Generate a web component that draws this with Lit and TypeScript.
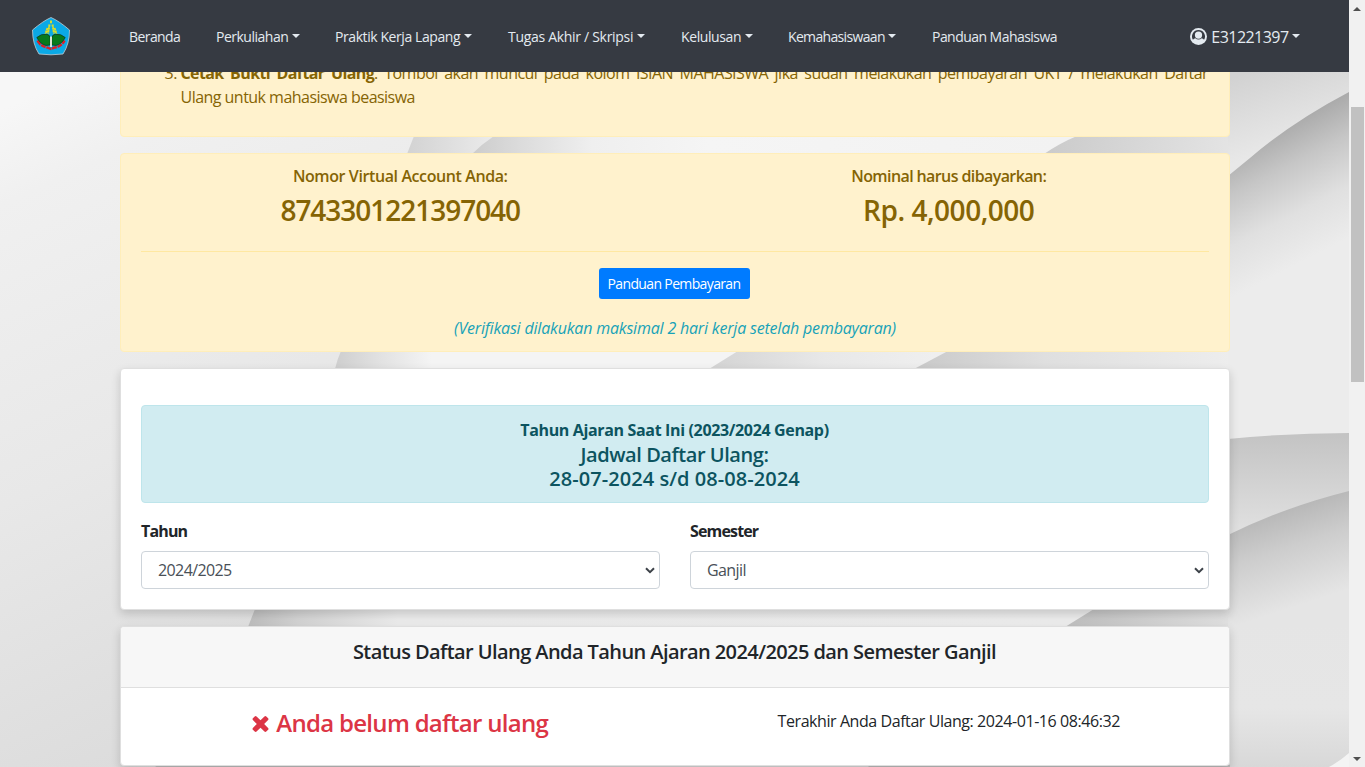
import { LitElement, html, css, svg } from "lit";
import { customElement } from "lit/decorators.js";

interface NavItem { label: string; menu: boolean; cls: string; }

const NAV: NavItem[] = [
  { label: "Beranda", menu: false, cls: "n1" },
  { label: "Perkuliahan", menu: true, cls: "n2" },
  { label: "Praktik Kerja Lapang", menu: true, cls: "n3" },
  { label: "Tugas Akhir / Skripsi", menu: true, cls: "n4" },
  { label: "Kelulusan", menu: true, cls: "n5" },
  { label: "Kemahasiswaan", menu: true, cls: "n6" },
  { label: "Panduan Mahasiswa", menu: false, cls: "n7" },
];

const stops = (list: [number, string][]) =>
  list.map(([o, c]) => svg`<stop offset=${o} stop-color=${c}></stop>`);

@customElement("page-backdrop")
export class PageBackdrop extends LitElement {
  static styles = css`
    :host { display: block; }
    svg { display: block; width: 100%; height: 100%; }
  `;
  render() {
    return html`<svg viewBox="0 0 1349 767" preserveAspectRatio="none">
      <defs>
        <linearGradient id="base" gradientUnits="userSpaceOnUse" x1="0" y1="110" x2="300" y2="767">${stops([[0, "#f7f7f7"], [0.12, "#f0f0f0"], [0.5, "#e8e8e8"], [1, "#d9d9d9"]])}</linearGradient>
        <linearGradient id="a" gradientUnits="userSpaceOnUse" x1="405" y1="0" x2="490" y2="0">${stops([[0, "#d2d2d2"], [1, "#eaeaea"]])}</linearGradient>
        <linearGradient id="b" gradientUnits="userSpaceOnUse" x1="475" y1="0" x2="1060" y2="0">${stops([[0, "#cdcdcd"], [0.08, "#dcdcdc"], [0.2, "#efefef"], [0.4, "#f5f5f5"], [1, "#f2f2f2"]])}</linearGradient>
        <linearGradient id="c" gradientUnits="userSpaceOnUse" x1="1050" y1="130" x2="1230" y2="160">${stops([[0, "#cbcbcb"], [1, "#e4e4e4"]])}</linearGradient>
        <linearGradient id="d" gradientUnits="userSpaceOnUse" x1="335" y1="0" x2="720" y2="0">${stops([[0, "#cecece"], [0.12, "#e2e2e2"], [0.25, "#f4f4f4"], [1, "#f4f4f4"]])}</linearGradient>
        <linearGradient id="e" gradientUnits="userSpaceOnUse" x1="712" y1="0" x2="935" y2="0">${stops([[0, "#d4d4d4"], [0.5, "#e8e8e8"], [1, "#efefef"]])}</linearGradient>
        <linearGradient id="f" gradientUnits="userSpaceOnUse" x1="920" y1="0" x2="1230" y2="0">${stops([[0, "#cacaca"], [0.4, "#dfdfdf"], [1, "#ededed"]])}</linearGradient>
        <linearGradient id="g" gradientUnits="userSpaceOnUse" x1="248" y1="0" x2="1080" y2="0">${stops([[0, "#bdbdbd"], [0.06, "#d2d2d2"], [0.18, "#ebebeb"], [1, "#ececec"]])}</linearGradient>
        <linearGradient id="h" gradientUnits="userSpaceOnUse" x1="1070" y1="0" x2="1230" y2="0">${stops([[0, "#c0c0c0"], [1, "#e0e0e0"]])}</linearGradient>
        <linearGradient id="r1" gradientUnits="userSpaceOnUse" x1="1250" y1="72" x2="1275" y2="150">${stops([[0, "#d2d2d2"], [1, "#e8e8e8"]])}</linearGradient>
        <linearGradient id="r2" gradientUnits="userSpaceOnUse" x1="1275" y1="128" x2="1335" y2="245">${stops([[0, "#a9a9a9"], [0.3, "#c6c6c6"], [0.65, "#e0e0e0"], [1, "#ececec"]])}</linearGradient>
        <linearGradient id="r3" gradientUnits="userSpaceOnUse" x1="0" y1="433" x2="0" y2="530">${stops([[0, "#c3c3c3"], [1, "#e0e0e0"]])}</linearGradient>
        <linearGradient id="r4" gradientUnits="userSpaceOnUse" x1="1270" y1="513" x2="1300" y2="605">${stops([[0, "#b7b7b7"], [0.4, "#cdcdcd"], [1, "#e5e5e5"]])}</linearGradient>
        <linearGradient id="r5" gradientUnits="userSpaceOnUse" x1="0" y1="620" x2="0" y2="767">${stops([[0, "#e5e5e5"], [0.6, "#e6e6e6"], [1, "#d8d8d8"]])}</linearGradient>
      </defs>
      <rect width="1349" height="767" fill="url(#base)"></rect>
      <path d="M414 136 L407 154 H1060 V136Z" fill="url(#a)"></path>
      <path d="M494 136 Q482 144 472 154 H1230 V136Z" fill="url(#b)"></path>
      <path d="M1077 136 Q1060 143 1044 154 H1230 V136Z" fill="url(#c)"></path>
      <path d="M341 351 Q337 360 335 369 H740 V351Z" fill="url(#d)"></path>
      <path d="M738 351 L709 369 H960 V351Z" fill="url(#e)"></path>
      <path d="M948 351 L914 369 H1230 V351Z" fill="url(#f)"></path>
      <path d="M255 609 L248 627 H1100 V609Z" fill="url(#g)"></path>
      <path d="M1094 609 L1065 627 H1230 V609Z" fill="url(#h)"></path>
      <path d="M1228 72 H1349 V240 H1228Z" fill="url(#r1)"></path>
      <path d="M1349 92 Q1292 122 1250 158 L1228 176 V440 H1349Z" fill="url(#r2)"></path>
      <path d="M1228 439 Q1290 433 1349 433 V560 H1228Z" fill="url(#r3)"></path>
      <path d="M1228 535 Q1285 507 1349 491 V767 H1228Z" fill="url(#r4)"></path>
      <path d="M1228 627 H1349 V767 H1228Z" fill="url(#r5)"></path>
      <path d="M1329 767 Q1340 761 1349 753 V767Z" fill="#f4f4f4"></path>
      <path d="M158 765 H420 V767 H155Z M870 765 H1230 V767 H868Z" fill="#bdbdbd"></path>
    </svg>`;
  }
}

@customElement("app-root")
export class AppRoot extends LitElement {
  static styles = css`
    :host { display: grid; grid-template-columns: 1349px 16px; width: 1365px; height: 767px; overflow: hidden;
      font-family: "Open Sans", "Noto Sans", sans-serif; font-size: 16px; line-height: 24px; color: #212529; }
    * { box-sizing: border-box; }
    .page { position: relative; height: 767px; overflow: hidden; }
    .backdrop { position: absolute; inset: 0; }
    .nav { position: relative; z-index: 2; height: 72px; background: #363a42; display: flex; align-items: center; padding: 0 49px 0 31px; color: #e4eaf0; font-size: 14px; white-space: nowrap; }
    .logo { width: 40px; height: 40px; margin-right: 58px; }
    .links { display: flex; align-items: center; flex: 1; padding-top: 2px; }
    .link { display: flex; align-items: center; flex: none; }
    .caret { width: 0; height: 0; border: 4px solid transparent; border-top-color: currentColor; border-bottom: 0; margin: -3px 0 0 3.500px; }
    .n1 { width: 87px; letter-spacing: -0.58px; } .n2 { width: 119px; letter-spacing: -0.5px; }
    .n3 { width: 173px; letter-spacing: -0.42px; } .n4 { width: 173px; letter-spacing: -0.3px; }
    .n5 { width: 107px; letter-spacing: -0.4px; } .n6 { width: 144px; letter-spacing: -0.66px; }
    .n7 { width: 130px; letter-spacing: -0.54px; }
    .user { display: flex; align-items: center; font-size: 16px; letter-spacing: -0.55px; padding-top: 1px; }
    .user svg { width: 17px; height: 17px; margin: -1px 4px 0 0; }
    .user .caret { margin-top: -1px; }
    .content { position: relative; width: 1110px; margin: -25px 0 0 120px; display: flex; flex-direction: column; gap: 16px; }
    .alert { background: #fff2cd; border: 1px solid #ffeeba; border-radius: 4px; color: #856404; padding: 12px 20px; }
    .steps { margin: 1px 0 15px; padding: 0 1px 0 39.500px; text-align: justify; letter-spacing: -0.53px; }
    .steps b { font-weight: 700; letter-spacing: -0.6px; }
    .row { display: grid; grid-template-columns: 1fr 1fr; column-gap: 30px; }
    .pay { text-align: center; height: 199px; }
    .pay .row { padding: 1px 1px 0 0; }
    .cap { font-weight: 560; line-height: 19.200px; margin-bottom: 8px; letter-spacing: -0.4px; }
    .cap.amount { letter-spacing: -0.6px; }
    .num { font-weight: 560; font-size: 28px; line-height: 33.600px; margin-bottom: 7px; letter-spacing: -1.03px; }
    .num.amount { letter-spacing: -0.48px; }
    .hr { height: 1px; background: #ffe8a1; margin: 16px 0; }
    .btnrow { height: 31px; display: flex; justify-content: center; margin: 0 2px 17px 0; }
    .btn { width: 151px; height: 31px; background: #007bff; color: #fff; border: 0; border-radius: 3px; font: 14px/21px "Open Sans", sans-serif; padding: 1px 0 0; letter-spacing: -0.64px; }
    .note { font-style: italic; color: #17a2b8; letter-spacing: -0.19px; }
    .card { background: #fff; border: 1px solid #dfdfdf; border-radius: 4px; box-shadow: 0 4px 10px rgba(0,0,0,.16); }
    .filter { height: 242px; padding: 36px 20px 20px; }
    .info { background: #d1ecf1; border: 1px solid #bee5eb; border-radius: 4px; color: #0c5460; text-align: center; height: 98px; padding: 12px 13px 12px 12px; margin-bottom: 16px; }
    .term { font-weight: 700; letter-spacing: -0.35px; margin-bottom: 1px; }
    .sched { font-weight: 560; font-size: 20px; line-height: 24px; letter-spacing: -0.45px; }
    .sched.dates { letter-spacing: 0.06px; }
    .field { display: flex; flex-direction: column; gap: 8px; }
    .field label { font-weight: 700; letter-spacing: -0.85px; }
    .select { height: 38px; border: 1px solid #ced4da; border-radius: 4px; padding: 0 4px 0 16px; display: flex; align-items: center; justify-content: space-between; color: #495057; letter-spacing: -0.6px; }
    .select svg { width: 10px; height: 7px; }
    .status { height: 140px; overflow: hidden; }
    .head { height: 61px; background: #f7f7f7; border-bottom: 1px solid #dfdfdf; text-align: center; font-weight: 560; font-size: 20px; line-height: 24px; padding: 13px 1px 0 0; letter-spacing: -0.58px; }
    .body { padding: 20px 21px 20px 20px; text-align: center; }
    .no { display: flex; align-items: center; justify-content: center; color: #dc3545; font-weight: 560; font-size: 24px; line-height: 30px; letter-spacing: -0.7px; }
    .no svg { width: 17px; height: 16px; margin-right: 7px; margin-top: 1px; }
    .last { padding-top: 1px; letter-spacing: -0.43px; }
    .bar { background: #f1f1f1; display: flex; flex-direction: column; align-items: center; height: 767px; }
    .up, .down { width: 0; height: 0; border: 4px solid transparent; }
    .up { border-bottom-color: #505050; border-top: 0; margin-top: 7px; }
    .thumb { width: 13px; height: 275px; margin: 96px 0 auto; background: #c1c1c1; }
    .down { border-top-color: #505050; border-bottom: 0; margin-bottom: 6px; }
  `;

  private logo() {
    return html`<svg class="logo" viewBox="0 0 40 40">
      <path d="M20 1.500 Q28 5 38.500 14 Q38.500 28 32 38 Q20 39.600 8 38 Q1.500 28 1.500 14 Q12 5 20 1.500Z" fill="#0ba9e6" stroke="#c4ccd2" stroke-width=".8"></path>
      <path d="M20 4.500v3M18.500 8.500l-1.500 9M21.500 8.500l1.500 9M16.500 12l-2 6M23.500 12l2 6" fill="none" stroke="#d9dc2a" stroke-width="2" stroke-dasharray="2.400 .4"></path>
      <path d="M6.500 24.500 Q9 30 16 31.500 L20 33 L24 31.500 Q31 30 33.500 24.500" fill="none" stroke="#dd1f26" stroke-width="2.400" stroke-dasharray="5 .8"></path>
      <path d="M19.200 29 L15 29.500 Q9 28 5.800 21.500 Q10 17.500 16 18.300 Q19 19 19.200 22Z M20.800 29 L25 29.500 Q31 28 34.200 21.500 Q30 17.500 24 18.300 Q21 19 20.800 22Z" fill="#077a1c" stroke="#10301a" stroke-width=".7"></path>
      <path d="M20 20.500v10.500" stroke="#f2f2e2" stroke-width="1.800"></path>
    </svg>`;
  }

  private select(label: string, value: string) {
    return html`<div class="field"><label>${label}</label>
      <div class="select"><span>${value}</span>
        <svg viewBox="0 0 10 7"><path d="M1 1.300 L5 5.200 L9 1.300" fill="none" stroke="#3c4248" stroke-width="2"></path></svg>
      </div></div>`;
  }

  render() {
    return html`
      <div class="page">
        <page-backdrop class="backdrop"></page-backdrop>
        <nav class="nav">
          ${this.logo()}
          <div class="links">${NAV.map((n) => html`<div class="link ${n.cls}"><span>${n.label}</span>${n.menu ? html`<i class="caret"></i>` : ""}</div>`)}</div>
          <div class="user">
            <svg viewBox="0 0 496 496"><circle cx="248" cy="248" r="248" fill="currentColor"></circle><path d="M248 58a190 190 0 0 1 162 288c-18-28-42-44-72-48a126 126 0 0 1-180 0c-30 4-54 20-72 48A190 190 0 0 1 248 58z" fill="#363a42"></path><circle cx="248" cy="206" r="106" fill="currentColor"></circle></svg>
            <span>E31221397</span><i class="caret"></i>
          </div>
        </nav>
        <main class="content">
          <section class="alert">
            <ol class="steps" start="3"><li><b>Cetak Bukti Daftar Ulang</b>. Tombol akan muncul pada kolom ISIAN MAHASISWA jika sudah melakukan pembayaran UKT / melakukan Daftar Ulang&nbsp;untuk mahasiswa beasiswa</li></ol>
          </section>
          <section class="alert pay">
            <div class="row">
              <div><div class="cap">Nomor Virtual Account Anda:</div><div class="num">8743301221397040</div></div>
              <div><div class="cap amount">Nominal harus dibayarkan:</div><div class="num amount">Rp. 4,000,000</div></div>
            </div>
            <div class="hr"></div>
            <div class="btnrow"><button class="btn">Panduan Pembayaran</button></div>
            <div class="note">(Verifikasi dilakukan maksimal 2 hari kerja setelah pembayaran)</div>
          </section>
          <section class="card filter">
            <div class="info">
              <div class="term">Tahun Ajaran Saat Ini (2023/2024 Genap)</div>
              <div class="sched">Jadwal Daftar Ulang:</div>
              <div class="sched dates">28-07-2024 s/d 08-08-2024</div>
            </div>
            <div class="row">${this.select("Tahun", "2024/2025")}${this.select("Semester", "Ganjil")}</div>
          </section>
          <section class="card status">
            <div class="head">Status Daftar Ulang Anda Tahun Ajaran 2024/2025 dan Semester Ganjil</div>
            <div class="row body">
              <div class="no"><svg viewBox="110 366 1188 1188"><path fill="currentColor" d="M1298 1322q0 40-28 68l-136 136q-28 28-68 28t-68-28L704 1232l-294 294q-28 28-68 28t-68-28l-136-136q-28-28-28-68t28-68l294-294L138 666q-28-28-28-68t28-68l136-136q28-28 68-28t68 28l294 294 294-294q28-28 68-28t68 28l136 136q28 28 28 68t-28 68l-294 294 294 294q28 28 28 68z"></path></svg><span>Anda belum daftar ulang</span></div>
              <div class="last">Terakhir Anda Daftar Ulang: 2024-01-16 08:46:32</div>
            </div>
          </section>
        </main>
      </div>
      <div class="bar"><i class="up"></i><i class="thumb"></i><i class="down"></i></div>
    `;
  }
}
